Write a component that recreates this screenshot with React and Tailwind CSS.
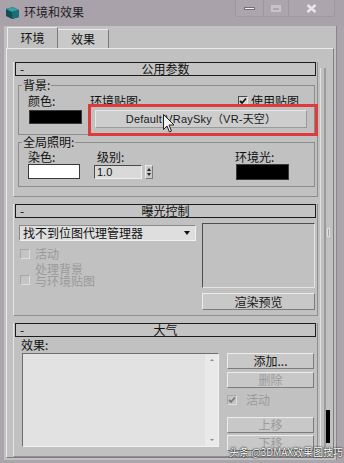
import React from "react";

const FONT = "font-['Noto_Sans_CJK_SC','Noto_Sans',sans-serif]";

function Check({ checked, disabled, className = "" }) {
  return (
    <div
      className={
        "w-[10px] h-[10px] shrink-0 border flex items-center justify-center " +
        (disabled
          ? "border-[#a8a8a8] bg-[#c4c4c4] border-r-[#dedede] border-b-[#dedede] "
          : "border-[#4a4a4a] border-r-[#e6e6e6] border-b-[#e6e6e6] bg-[#d6d6d6] ") +
        className
      }
    >
      {checked && (
        <svg width="8" height="8" viewBox="0 0 8 8">
          <path d="M1 4 L3 6 L7 1.5" fill="none" stroke={disabled ? "#7a7a7a" : "#111"} strokeWidth="1.8" />
        </svg>
      )}
    </div>
  );
}

function Btn({ children, className = "", disabled }) {
  return (
    <div
      className={
        "flex items-center justify-center border border-[#ececec] border-r-[#7c7c7c] border-b-[#7c7c7c] bg-[#c8c8c8] text-[12px] leading-[12px] " +
        (disabled ? "text-[#9b9b9b] " : "text-[#151515] ") +
        className
      }
    >
      {children}
    </div>
  );
}

function Rollout({ title, children, className = "" }) {
  return (
    <div
      className={
        "w-[305px] shrink-0 border-l border-r border-b border-l-[#e4e4e4] border-r-[#8e8e8e] border-b-[#8e8e8e] px-[1px] " +
        className
      }
    >
      <div className="h-[14px] border border-[#1c1c1c] bg-[#c4c4c4] flex items-center relative">
        <span className="absolute left-[4px] top-[0px] text-[12px] leading-[11px]">-</span>
        <span className="w-full text-center text-[12px] leading-[12px] text-[#111]">{title}</span>
      </div>
      {children}
    </div>
  );
}

export default function App() {
  return (
    <div
      className={
        "relative w-[344px] h-[463px] overflow-hidden bg-[#aaa5ab] text-[#111] text-[12px] leading-[13px] flex flex-col " +
        FONT
      }
    >
      {/* Title bar */}
      <div className="h-[26px] shrink-0 flex items-start bg-[#a9a2aa]">
        <svg className="ml-[5px] mt-[6px]" width="15" height="14" viewBox="0 0 15 14">
          <path d="M1 3 L8 1 L14 4 L14 11 L7 13 L1 10 Z" fill="#0f4f55" />
          <path d="M1 3 L8 1 L14 4 L7 6 Z" fill="#3a9da3" />
          <path d="M7 6 L14 4 L14 11 L7 13 Z" fill="#1b6f74" />
        </svg>
        <span className="ml-[4px] mt-[5px] text-[12px] leading-[14px] text-[#1d1d1d]">环境和效果</span>
        <div className="flex-1" />
        <div className="flex h-[17px] mr-[9px] border-x border-b border-[#9d97a0] rounded-b-[3px] bg-[#aca5ad]">
          <div className="w-[28px] flex items-center justify-center border-r border-[#9d97a0]">
            <div className="w-[11px] h-[3px] bg-[#f2f2f2] border border-[#756e78]" />
          </div>
          <div className="w-[25px] flex items-center justify-center border-r border-[#9d97a0]">
            <div className="w-[10px] h-[7px] border-2 border-t-[3px] border-[#c8c3ca]" />
          </div>
          <div className="w-[45px] flex items-center justify-center">
            <svg width="11" height="9" viewBox="0 0 11 9">
              <path d="M1.5 1 L9.5 8 M9.5 1 L1.5 8" stroke="#e8e8e8" strokeWidth="2.4" />
            </svg>
          </div>
        </div>
      </div>

      {/* Client area */}
      <div className="flex-1 ml-[4px] mr-[7px] mb-[8px] bg-[#c1c1c1] flex flex-col border-r border-[#8a858c]">
        {/* Tabs */}
        <div className="h-[22px] shrink-0 flex items-end pl-[3px]">
          <div className="w-[51px] h-[21px] border-t border-l border-r border-t-[#ebebeb] border-l-[#ebebeb] border-r-[#7a7a7a] bg-[#c1c1c1] flex items-center justify-center text-[12px] leading-[12px] pb-[1px]">
            环境
          </div>
          <div className="w-[51px] h-[19px] border-t border-r border-t-[#ebebeb] border-r-[#7a7a7a] bg-[#c9c9c9] flex items-center justify-center text-[12px] leading-[12px]">
            效果
          </div>
        </div>

        {/* Tab panel */}
        <div className="flex-1 ml-[2px] mr-[2px] mb-[2px] border border-l-[#ececec] border-t-[#ececec] border-r-[#7e7e7e] border-b-[#7e7e7e] flex overflow-hidden">
          {/* Rollouts column */}
          <div className="pl-[6px] pt-[13px] flex flex-col">
            {/* Rollout 1 */}
            <Rollout title="公用参数" className="pb-[9px]">
              <fieldset className="ml-[3px] mt-[3px] w-[297px] border border-[#8c8c8c] pb-[6px]">
                <legend className="ml-[3px] px-[1px] text-[12px] leading-[12px]">背景:</legend>
                <div className="flex items-center h-[13px] mt-[3px] pl-[9px]">
                  <span className="w-[62px]">颜色:</span>
                  <span className="w-[148px]">环境贴图:</span>
                  <Check checked />
                  <span className="ml-[3px]">使用贴图</span>
                </div>
                <div className="flex items-start mt-[3px] pl-[10px]">
                  <div className="w-[53px] h-[14px] bg-black border border-[#3a3a3a]" />
                  <div className="ml-[13px] w-[212px] h-[18px] border border-[#9a9a9a] border-t-[#e8e8e8] border-l-[#e8e8e8] bg-[#cdcdcd] flex items-center justify-center text-[11px] leading-[12px] text-[#1a1a1a] font-['Liberation_Sans','Noto_Sans_CJK_SC',sans-serif] tracking-[0.2px]">
                    Default VRaySky（VR-天空）
                  </div>
                </div>
              </fieldset>

              <fieldset className="ml-[3px] mt-[1px] w-[297px] border border-[#8c8c8c] pb-[6px]">
                <legend className="ml-[3px] px-[1px] text-[12px] leading-[12px]">全局照明:</legend>
                <div className="flex items-center h-[13px] mt-[2px] pl-[9px]">
                  <span className="w-[69px]">染色:</span>
                  <span className="w-[138px]">级别:</span>
                  <span>环境光:</span>
                </div>
                <div className="flex items-start mt-[1px] pl-[9px]">
                  <div className="w-[52px] h-[15px] bg-white border border-[#3a3a3a]" />
                  <div className="ml-[14px] mt-[1px] w-[48px] h-[14px] bg-[#d9d9d9] border border-[#4a4a4a] border-r-[#efefef] border-b-[#efefef] flex items-center pl-[2px] text-[11px] leading-[11px] font-['Liberation_Sans',sans-serif]">
                    1.0
                  </div>
                  <div className="ml-[3px] mt-[1px] w-[8px] h-[14px] bg-[#c9c9c9] border border-[#ededed] border-r-[#7a7a7a] border-b-[#7a7a7a] flex flex-col items-center justify-center gap-[2px]">
                    <div className="w-0 h-0 border-l-[2.5px] border-r-[2.5px] border-b-[3px] border-l-transparent border-r-transparent border-b-[#222]" />
                    <div className="w-0 h-0 border-l-[2.5px] border-r-[2.5px] border-t-[3px] border-l-transparent border-r-transparent border-t-[#222]" />
                  </div>
                  <div className="ml-[83px] w-[53px] h-[16px] bg-black border border-[#3a3a3a]" />
                </div>
              </fieldset>
            </Rollout>

            {/* Rollout 2 */}
            <Rollout title="曝光控制" className="mt-[7px] pb-[5px]">
              <div className="flex mt-[5px]">
                <div className="ml-[4px] w-[177px] flex flex-col">
                  <div className="mt-[2px] h-[16px] bg-[#dedede] border border-[#8a8a8a] border-r-[#f0f0f0] border-b-[#f0f0f0] flex items-center pl-[3px] pr-[5px]">
                    <span className="flex-1 text-[12px] leading-[12px]">找不到位图代理管理器</span>
                    <div className="w-0 h-0 border-l-[3px] border-r-[3px] border-t-[4px] border-l-transparent border-r-transparent border-t-[#111]" />
                  </div>
                  <div className="flex items-center h-[13px] mt-[6px] pl-[1px] text-[#9a9a9a]">
                    <Check disabled />
                    <span className="ml-[5px]">活动</span>
                  </div>
                  <div className="flex items-end mt-[3px] pl-[1px] text-[#9a9a9a]">
                    <Check disabled className="mb-[2px]" />
                    <div className="ml-[5px] flex flex-col text-[12px] leading-[12px]">
                      <span>处理背景</span>
                      <span>与环境贴图</span>
                    </div>
                  </div>
                </div>
                <div className="ml-[6px] w-[113px] flex flex-col">
                  <div className="h-[65px] border border-[#4e4e4e] border-r-[#e4e4e4] border-b-[#e4e4e4] bg-[#c1c1c1]" />
                  <Btn className="mt-[5px] h-[17px]">渲染预览</Btn>
                </div>
              </div>
            </Rollout>

            {/* Rollout 3 */}
            <Rollout title="大气" className="mt-[7px] pb-[5px]">
              <div className="ml-[6px] mt-[2px] text-[12px] leading-[12px]">效果:</div>
              <div className="flex mt-[2px]">
                <div className="ml-[7px] w-[197px] h-[94px] bg-[#e2e2e2] border border-[#6e6e6e] border-r-[#f2f2f2] border-b-[#f2f2f2] flex justify-end">
                  <div className="w-[13px] bg-[#e9e9e9] flex flex-col items-center justify-between py-[5px]">
                    <div className="w-0 h-0 border-l-[2px] border-r-[2px] border-b-[2px] border-l-transparent border-r-transparent border-b-[#8a8a8a]" />
                    <div className="w-0 h-0 border-l-[2px] border-r-[2px] border-t-[2px] border-l-transparent border-r-transparent border-t-[#8a8a8a]" />
                  </div>
                </div>
                <div className="ml-[8px] w-[87px] flex flex-col">
                  <Btn className="h-[16px]">添加...</Btn>
                  <Btn disabled className="mt-[3px] h-[16px]">删除</Btn>
                  <div className="flex items-center h-[13px] mt-[5px] text-[#9a9a9a]">
                    <Check checked disabled />
                    <span className="ml-[9px]">活动</span>
                  </div>
                  <Btn disabled className="mt-[11px] h-[16px]">上移</Btn>
                  <Btn disabled className="mt-[2px] h-[16px]">下移</Btn>
                </div>
              </div>
            </Rollout>
          </div>

          {/* Rollout scroll track */}
          <div className="ml-[2px] mt-[19px] w-[11px] border-l border-[#e2e2e2] relative">
            <div className="absolute left-[3px] top-0 bottom-0 w-[2px] bg-[#9b9b9b]" />
            <div className="absolute left-[6px] top-[160px] w-[3px] h-[9px] bg-[#a3a3a3] border border-[#e0e0e0]" />
            <div className="absolute left-[5px] top-[342px] w-[4px] h-[33px] bg-black" />
          </div>
        </div>
      </div>

      {/* Red annotation rectangle */}
      <div className="absolute left-[88px] top-[104px] w-[230px] h-[32px] border-[3px] border-[#de3b3b]" />

      {/* Mouse cursor */}
      <svg className="absolute left-[163px] top-[114px]" width="12" height="19" viewBox="0 0 12 19">
        <path d="M0.5 0.5 L0.5 15.5 L4 12 L6.5 18 L8.5 17 L6 11 L11 11 Z" fill="#f4f4f4" stroke="#222" strokeWidth="1" />
      </svg>

      {/* Watermark */}
      <div className="absolute left-[229px] top-[446px] text-[10px] leading-[12px] text-white [text-shadow:0_0_2px_#000,0_0_1px_#000]">
        头条 @3DMAX效果图技巧
      </div>
    </div>
  );
}
